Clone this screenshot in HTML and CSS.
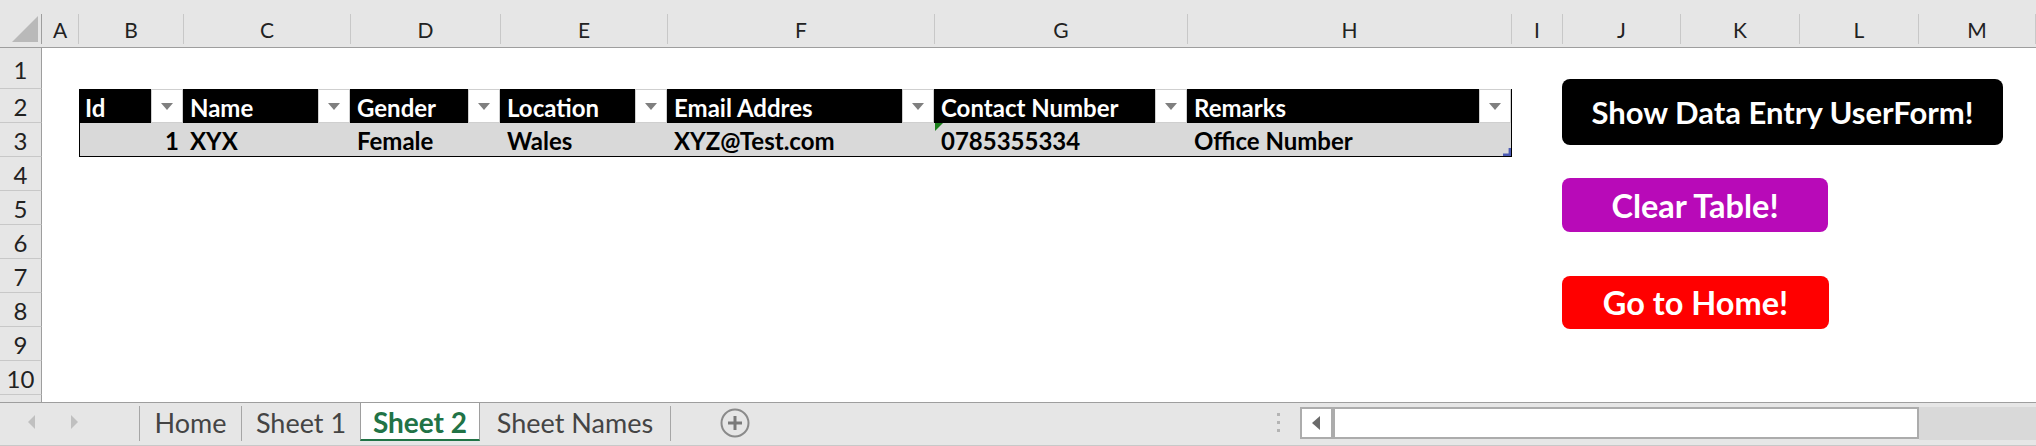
FILE: index.html
```html
<!DOCTYPE html>
<html lang="en">
<head>
<meta charset="utf-8">
<title>Sheet 2</title>
<link rel="stylesheet" href="styles.css">
</head>
<body>
<div class="app">
  <div class="topstrip"></div>
  <div class="sheet">
    <div class="line colhead">
      <div class="corner"><svg width="26" height="26" viewBox="0 0 26 26"><polygon points="0,26 26,26 26,0" fill="#b9b9b9"/></svg></div>
      <div>A</div><div>B</div><div>C</div><div>D</div><div>E</div><div>F</div><div>G</div><div>H</div><div>I</div><div>J</div><div>K</div><div>L</div><div>M</div><div class="blank"></div>
    </div>
    <div class="line row r1"><div class="rh">1</div></div>
    <div class="line row"><div class="rh">2</div><div></div>
      <div class="th"><span>Id</span><span class="dd"></span></div>
      <div class="th"><span>Name</span><span class="dd"></span></div>
      <div class="th"><span>Gender</span><span class="dd"></span></div>
      <div class="th"><span>Location</span><span class="dd"></span></div>
      <div class="th"><span>Email Addres</span><span class="dd"></span></div>
      <div class="th"><span>Contact Number</span><span class="dd"></span></div>
      <div class="th"><span>Remarks</span><span class="dd"></span></div>
    </div>
    <div class="line row"><div class="rh">3</div><div></div>
      <div class="td first num">1</div>
      <div class="td">XYX</div>
      <div class="td">Female</div>
      <div class="td">Wales</div>
      <div class="td">XYZ@Test.com</div>
      <div class="td flag">0785355334</div>
      <div class="td last">Office Number</div>
    </div>
    <div class="line row"><div class="rh">4</div></div>
    <div class="line row"><div class="rh">5</div></div>
    <div class="line row"><div class="rh">6</div></div>
    <div class="line row"><div class="rh">7</div></div>
    <div class="line row"><div class="rh">8</div></div>
    <div class="line row"><div class="rh">9</div></div>
    <div class="line row"><div class="rh">10</div></div>
    <div class="line row"><div class="rh"></div></div>

    <div class="btn btn-show">Show Data Entry UserForm!</div>
    <div class="btn btn-clear">Clear Table!</div>
    <div class="btn btn-home">Go to Home!</div>
  </div>
  <div class="tabbar">
    <div class="nav"><span class="arr-l"></span><span class="arr-r"></span></div>
    <div class="sep"></div>
    <div class="tab t-home">Home</div>
    <div class="sep"></div>
    <div class="tab t-s1">Sheet 1</div>
    <div class="tab t-s2 active">Sheet 2</div>
    <div class="tab t-names">Sheet Names</div>
    <div class="sep"></div>
    <div class="plus"><svg width="30" height="30" viewBox="0 0 30 30"><circle cx="15" cy="15" r="13.5" fill="none" stroke="#8a8a8a" stroke-width="2"/><path d="M15 8 V22 M8 15 H22" stroke="#7a7a7a" stroke-width="3"/></svg></div>
    <div class="dots"><i></i><i></i><i></i></div>
    <div class="hscroll">
      <div class="hs-btn"><span class="hs-arr"></span></div>
      <div class="hs-div"></div>
      <div class="hs-thumb"></div>
    </div>
    <div class="hs-rest"></div>
  </div>
</div>
</body>
</html>
```
FILE: styles.css
```css
* { box-sizing: border-box; }
html, body { margin: 0; padding: 0; }
body {
  width: 2036px;
  height: 446px;
  overflow: hidden;
  background: #fff;
  font-family: Lato, "Liberation Sans", sans-serif;
}
.app { display: flex; flex-direction: column; height: 446px; }
.topstrip { height: 14px; flex: none; background: #e6e6e6; }

.sheet {
  position: relative;
  flex: 1;
  overflow: hidden;
  --cols: 42px 37px 105px 167px 150px 167px 267px 253px 324px 51px 118px 119px 119px 1fr;
}
.line { display: grid; grid-template-columns: var(--cols); }

.colhead {
  height: 34px;
  background: #e6e6e6;
  border-bottom: 1px solid #9e9e9e;
}
.colhead > div {
  border-right: 1px solid #c8c8c8;
  display: flex;
  align-items: center;
  justify-content: center;
  font-size: 21px;
  color: #222;
  padding-top: 2px;
}
.colhead > .corner {
  border-right: 1px solid #9e9e9e;
  align-items: flex-end;
  justify-content: flex-end;
  padding: 0 3px 2px 0;
}
.colhead > .blank { border-right: none; }

.row { height: 34px; }
.r1 { height: 41px; }
.rh {
  background: #e6e6e6;
  border-right: 1px solid #9e9e9e;
  border-bottom: 1px solid #c8c8c8;
  display: flex;
  align-items: center;
  justify-content: center;
  font-size: 24px;
  color: #222;
  padding-top: 2px;
}

.th {
  background: #000;
  color: #fff;
  font-weight: 700;
  font-size: 24px;
  display: flex;
  align-items: center;
  justify-content: space-between;
  padding-left: 6px;
  white-space: nowrap;
}
.th > span:first-child { padding-top: 2px; }
.dd {
  flex: none;
  width: 32px;
  height: 100%;
  margin-right: 1px;
  background: #fff;
  border: 1px solid #cfcfcf;
  display: flex;
  align-items: center;
  justify-content: center;
}
.dd::after {
  content: "";
  border-left: 6px solid transparent;
  border-right: 6px solid transparent;
  border-top: 7px solid #7f7f7f;
}

.td {
  background: #d9d9d9;
  border-bottom: 1px solid #000;
  color: #000;
  font-weight: 700;
  font-size: 24px;
  display: flex;
  align-items: center;
  padding: 1px 5px 0 6px;
  white-space: nowrap;
}
.td.first { border-left: 1px solid #000; }
.td.num { justify-content: flex-end; }
.td.last { border-right: 1px solid #000; position: relative; }
.td.flag { position: relative; }
.td.flag::before {
  content: "";
  position: absolute;
  left: 0;
  top: 0;
  border-top: 8px solid #1b7f1b;
  border-right: 8px solid transparent;
}
.td.last::after {
  content: "";
  position: absolute;
  right: 0;
  bottom: 0;
  width: 8px;
  height: 8px;
  background: #4b5ab4;
  clip-path: polygon(100% 0, 100% 100%, 0 100%, 0 70%, 70% 70%, 70% 0);
}

.btn {
  position: absolute;
  left: 1562px;
  display: flex;
  align-items: center;
  justify-content: center;
  color: #fff;
  font-weight: 700;
  font-size: 31px;
  border-radius: 8px;
  white-space: nowrap;
}
.btn-show { top: 65px; width: 441px; height: 66px; background: #000; }
.btn-clear { top: 164px; width: 266px; height: 54px; background: #b80ab8; font-size: 32.5px; }
.btn-home { top: 262px; width: 267px; height: 53px; background: #ff0000; font-size: 32.5px; }

.tabbar {
  height: 44px;
  flex: none;
  background: #e6e6e6;
  border-top: 1px solid #9e9e9e;
  border-bottom: 1px solid #c8c8c8;
  display: flex;
  align-items: flex-start;
}
.nav {
  width: 139px;
  height: 38px;
  display: flex;
  align-items: center;
  flex: none;
}
.arr-l {
  margin-left: 28px;
  border-right: 7px solid #c0c0c0;
  border-top: 7px solid transparent;
  border-bottom: 7px solid transparent;
}
.arr-r {
  margin-left: 36px;
  border-left: 7px solid #c0c0c0;
  border-top: 7px solid transparent;
  border-bottom: 7px solid transparent;
}
.sep {
  flex: none;
  width: 1px;
  height: 35px;
  margin-top: 3px;
  background: #a6a6a6;
}
.tab {
  flex: none;
  height: 38px;
  display: flex;
  align-items: center;
  justify-content: center;
  font-size: 27px;
  color: #444;
  white-space: nowrap;
}
.t-home { width: 101px; }
.t-s1 { width: 118px; }
.t-s2 { width: 120px; }
.t-names { width: 190px; }
.tab.active {
  background: #fff;
  color: #217346;
  font-size: 28px;
  font-weight: 700;
  border-left: 1px solid #9e9e9e;
  border-right: 1px solid #9e9e9e;
  border-bottom: 2px solid #217346;
  padding-top: 2px;
}
.plus {
  flex: none;
  margin-left: 49px;
  margin-top: 5px;
  width: 30px;
  height: 30px;
}
.plus svg { display: block; }
.dots {
  flex: none;
  margin-left: 527px;
  margin-top: 10px;
  display: flex;
  flex-direction: column;
  gap: 5px;
}
.dots i { display: block; width: 3px; height: 3px; background: #b4b4b4; }
.hscroll {
  flex: none;
  margin-left: 20px;
  margin-top: 4px;
  width: 619px;
  height: 32px;
  border: 2px solid #acacac;
  display: flex;
  background: #fff;
}
.hs-btn {
  width: 29px;
  display: flex;
  align-items: center;
  justify-content: center;
}
.hs-arr {
  border-right: 8px solid #6b6b6b;
  border-top: 7.5px solid transparent;
  border-bottom: 7.5px solid transparent;
  margin-right: 2px;
}
.hs-div { width: 4px; background: #acacac; }
.hs-thumb { flex: 1; background: #fff; }
.hs-rest {
  flex: 1;
  margin-top: 4px;
  height: 33px;
  background: #d9d9d9;
}
```
